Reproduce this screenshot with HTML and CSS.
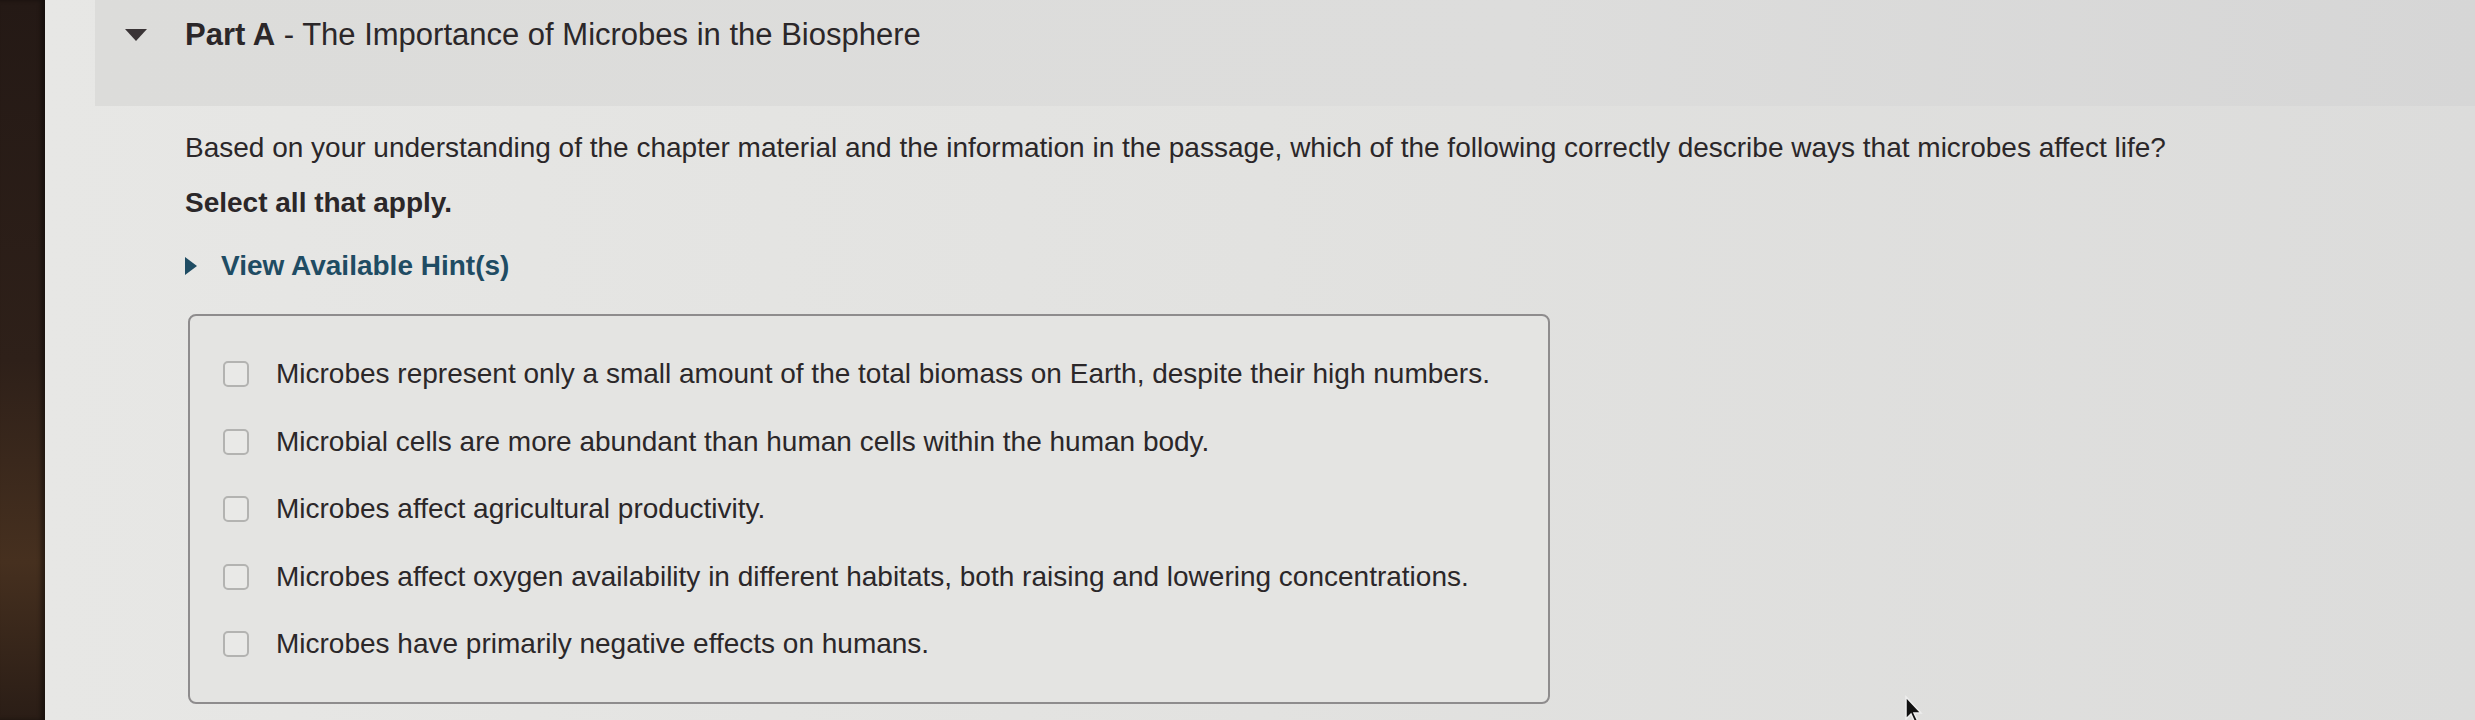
FILE: index.html
```html
<!DOCTYPE html>
<html lang="en">
<head>
    <meta charset="UTF-8">
    <title>Part A - The Importance of Microbes in the Biosphere</title>
    <link rel="stylesheet" href="styles.css">
</head>
<body>
    <div class="bezel"></div>

    <main class="page">
        <header class="part-header">
            <span class="caret-down"></span>
            <h2><b>Part A</b> - The Importance of Microbes in the Biosphere</h2>
        </header>

        <section class="part-body">
            <p class="prompt">Based on your understanding of the chapter material and the information in the passage, which of the following correctly describe ways that microbes affect life?</p>
            <p class="instruction">Select all that apply.</p>

            <div class="hint-toggle">
                <span class="caret-right"></span>
                <span>View Available Hint(s)</span>
            </div>

            <div class="choices" id="choices"></div>
        </section>
    </main>

    <svg class="cursor" width="22" height="30" viewBox="0 0 22 30">
        <path d="M2 2 L2 24 L7 19 L11 28 L14 26.5 L10 18 L17 18 Z" fill="#111" stroke="#eee" stroke-width="1.5"/>
    </svg>

    <script>
        const options = [
            "Microbes represent only a small amount of the total biomass on Earth, despite their high numbers.",
            "Microbial cells are more abundant than human cells within the human body.",
            "Microbes affect agricultural productivity.",
            "Microbes affect oxygen availability in different habitats, both raising and lowering concentrations.",
            "Microbes have primarily negative effects on humans."
        ];

        const choices = document.getElementById('choices');

        options.forEach(text => {
            const row = document.createElement('label');
            row.classList.add('choice');
            row.innerHTML = `<span class="checkbox"></span><span>${text}</span>`;
            choices.appendChild(row);
        });
    </script>
</body>
</html>
```

FILE: styles.css
```css
:root {
    --text-color: #2b2729;
    --hint-color: #1f4c63;
    --page-bg: #e3e3e1;
}

* {
    box-sizing: border-box;
    margin: 0;
    padding: 0;
}

body {
    display: flex;
    height: 720px;
    overflow: hidden;
    font-family: 'Liberation Sans', Arial, sans-serif;
    color: var(--text-color);
    background-color: var(--page-bg);
}

.bezel {
    width: 45px;
    flex-shrink: 0;
    background: linear-gradient(180deg, #241915 0%, #2e2019 50%, #46301f 78%, #2a1d16 100%);
    box-shadow: inset -4px 0 4px rgba(0, 0, 0, 0.4);
}

.page {
    flex: 1;
    background: linear-gradient(90deg, #e7e7e5 0%, #e2e2e0 50%, #dcdcdb 100%);
}

.part-header {
    display: flex;
    align-items: center;
    gap: 38px;
    height: 106px;
    margin-left: 50px;
    padding: 0 0 37px 30px;
    background: linear-gradient(90deg, #dcdcda 0%, #dddddc 60%, #d6d6d6 100%);
}

.caret-down {
    width: 0;
    height: 0;
    border-left: 11px solid transparent;
    border-right: 11px solid transparent;
    border-top: 12px solid #3a3436;
}

.part-header h2 {
    font-size: 31px;
    font-weight: normal;
    line-height: 38px;
}

.part-header b {
    font-weight: 600;
}

.part-body {
    padding: 26px 0 0 140px;
}

.prompt {
    font-size: 28px;
    line-height: 32px;
}

.instruction {
    margin-top: 23px;
    font-size: 28px;
    line-height: 32px;
    font-weight: bold;
}

.hint-toggle {
    display: flex;
    align-items: center;
    gap: 24px;
    margin-top: 31px;
    font-size: 28px;
    line-height: 32px;
    font-weight: bold;
    color: var(--hint-color);
}

.caret-right {
    width: 0;
    height: 0;
    border-top: 9px solid transparent;
    border-bottom: 9px solid transparent;
    border-left: 12px solid var(--hint-color);
}

.choices {
    display: flex;
    flex-direction: column;
    gap: 35.5px;
    width: 1362px;
    height: 390px;
    margin: 32px 0 0 3px;
    padding: 42px 0 0 33px;
    border: 2px solid #8e8c8d;
    border-radius: 8px;
    background-color: #e4e4e2;
}

.choice {
    display: flex;
    align-items: center;
    gap: 27px;
    font-size: 28px;
    line-height: 32px;
}

.checkbox {
    width: 26px;
    height: 26px;
    flex-shrink: 0;
    border: 2px solid #b3b3b1;
    border-radius: 5px;
    background-color: #e9e9e7;
}

.cursor {
    position: absolute;
    left: 1904px;
    top: 695px;
}
```
